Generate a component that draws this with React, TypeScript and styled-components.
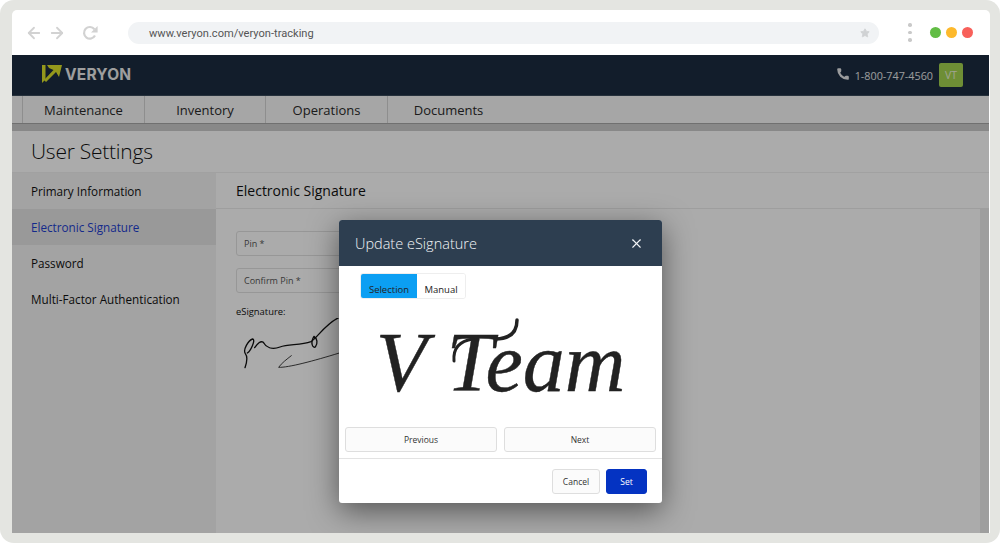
import React from "react";
import styled, { createGlobalStyle } from "styled-components";
import { ArrowLeft, ArrowRight, Star, Phone, X } from "lucide-react";

const Global = createGlobalStyle`
  html, body { margin: 0; padding: 0; background: #fff; }
  * { box-sizing: border-box; }
`;
const Frame = styled.div`
  width: 1000px; height: 543px; background: #e4e5e1; border-radius: 14px;
  padding: 10px 10px 10px 12px; overflow: hidden;
  font-family: "Open Sans", sans-serif; color: #222;
`;
const Win = styled.div`
  width: 100%; height: 100%; background: #fff; border-radius: 5px 5px 0 0; padding-right: 1px;
  display: flex; flex-direction: column; overflow: hidden;
`;
const BrowserBar = styled.div`
  height: 45px; flex: none; display: flex; align-items: center; padding-left: 13px; color: #d2d2d2;
`;
const NavIcons = styled.div`
  display: flex; align-items: center; gap: 5px; width: 103px;
  svg:last-child { margin-left: 11px; }
`;
const UrlPill = styled.div`
  width: 751px; height: 22px; background: #f1f3f5; border-radius: 11px; display: flex; align-items: center;
  justify-content: space-between; padding: 1px 9px 0 21px; font: 11.1px "Roboto", sans-serif; color: #555;
  svg { color: #d0d2d4; fill: #d0d2d4; }
`;
const Dots = styled.div`
  display: flex; flex-direction: column; gap: 4px; margin: 0 18px 0 29px;
  i { width: 3.5px; height: 3.5px; border-radius: 50%; background: #c9c9c9; display: block; }
`;
const Lights = styled.div`display: flex; gap: 5px;`;
const Light = styled.i<{ $c: string }>`
  width: 11px; height: 11px; border-radius: 50%; background: ${p => p.$c}; display: block;
`;
const AppArea = styled.div`
  position: relative; flex: 1; display: flex; flex-direction: column; overflow: hidden; background: #fff;
`;
const Header = styled.header`
  height: 41px; flex: none; background: #1b2c40; display: flex; align-items: center;
  justify-content: space-between; padding: 0 26px 0 30px; border-bottom: 1px solid #3a4a5a;
`;
const Logo = styled.div`display: flex; align-items: center; gap: 2px; margin-top: -2px;`;
const LogoText = styled.span`
  font: 700 15.5px "Inter", sans-serif; color: #ececec; letter-spacing: .2px;
`;
const Contact = styled.div`
  display: flex; align-items: center; font-size: 10.8px; color: #e6e8ea; gap: 5px;
  svg { fill: #e6e8ea; stroke: none; margin-top: -2px; }
`;
const Avatar = styled.div`
  width: 24px; height: 24px; margin-left: 1px; background: #a4d44f; color: #eef5de; border-radius: 2px;
  display: flex; align-items: center; justify-content: center; font-size: 10.5px;
`;
const Nav = styled.nav`
  height: 28px; flex: none; background: #f8f8f8; display: flex; padding-left: 10px;
  border-bottom: 1px solid #a8a8a8;
`;
const NavItem = styled.div<{ $w: number }>`
  width: ${p => p.$w}px; border-left: 1px solid #d4d4d4; display: flex; align-items: center; justify-content: center;
  font-size: 13px; color: #2a2a2a;
`;
const Strip = styled.div`height: 7px; flex: none; background: #cbcbcb;`;
const Title = styled.h1`
  margin: 0; height: 42px; flex: none; padding: 0 0 2px 19px; display: flex; align-items: center;
  font-weight: 300; font-size: 21px; letter-spacing: -.25px; color: #111; border-bottom: 1px solid #f0f0f0;
`;
const Body = styled.div`flex: 1; display: flex; min-height: 0;`;
const Side = styled.aside`width: 204px; flex: none; background: #f4f4f4;`;
const SideItem = styled.div<{ $active?: boolean }>`
  height: 36px; padding-left: 19px; display: flex; align-items: center; font-size: 11.7px; font-weight: 500;
  background: ${p => (p.$active ? "#e4e4e4" : "transparent")};
  color: ${p => (p.$active ? "#1f3fd0" : "#111")};
`;
const Main = styled.main`flex: 1; display: flex; flex-direction: column; min-width: 0; background: #fff;`;
const MainHead = styled.div`
  height: 36px; flex: none; padding-left: 20px; display: flex; align-items: center;
  font-size: 14px; font-weight: 500; color: #111; border-bottom: 1px solid #ececec;
`;
const MainBody = styled.div`flex: 1; display: flex; min-height: 0;`;
const Form = styled.div`flex: 1; padding: 22px 0 0 20px;`;
const Field = styled.div`
  width: 240px; height: 25px; border: 1px solid #e2e2e2; border-radius: 3px; margin-bottom: 12px;
  display: flex; align-items: center; padding-left: 7px; font-size: 9px; color: #555; background: #fff;
`;
const SigLabel = styled.div`font-size: 9.4px; color: #111; margin-top: 0; line-height: 13px;`;
const Signature = styled.svg`display: block; margin-top: 0;`;
const Scroll = styled.div`width: 9px; flex: none; background: #ececec;`;
const Overlay = styled.div`position: absolute; inset: 0; background: rgba(0, 0, 0, .33);`;
const Modal = styled.div`
  position: absolute; left: 327px; top: 165px; width: 323px; height: 283px; background: #fff; border-radius: 3px;
  box-shadow: 0 8px 30px rgba(0, 0, 0, .5); display: flex; flex-direction: column; overflow: hidden;
`;
const ModalHead = styled.div`
  height: 46px; flex: none; background: #2d3e50; color: #f2f4f6; display: flex; align-items: center;
  justify-content: space-between; padding: 0 18px 0 16px; font-weight: 300; font-size: 14.5px;
`;
const ModalBody = styled.div`flex: 1; display: flex; flex-direction: column; padding: 7px 6px 0;`;
const Tabs = styled.div`
  display: flex; align-self: flex-start; margin-left: 15px; height: 26px; border: 1px solid #eee;
  border-radius: 3px; overflow: hidden;
`;
const Tab = styled.div<{ $on?: boolean }>`
  width: ${p => (p.$on ? 56 : 48)}px; display: flex; align-items: flex-end; justify-content: center; padding-bottom: 1px;
  font-size: 9.5px; line-height: 14px; background: ${p => (p.$on ? "#0c9ff3" : "#fff")}; color: #222;
`;
const SigStage = styled.div`
  position: relative; height: 128px; display: flex; align-items: center; justify-content: center; padding-bottom: 2px;
`;
const SigText = styled.div`
  font: italic 84px "Liberation Serif", serif; color: #222; white-space: nowrap; -webkit-text-stroke: .4px #222;
`;
const Swash = styled.svg`position: absolute; left: 0; top: 0;`;
const Pager = styled.div`display: grid; grid-template-columns: 152px 152px; gap: 7px;`;
const PagerBtn = styled.div`
  height: 25px; border: 1px solid #dedede; border-radius: 3px; background: #fbfbfb;
  display: flex; align-items: center; justify-content: center; font-size: 8.5px; color: #333;
`;
const Footer = styled.div`
  height: 45px; flex: none; border-top: 1px solid #e3e3e3; display: flex; justify-content: flex-end;
  align-items: flex-start; gap: 6px; padding: 10px 15px 0 0;
`;
const Btn = styled.div<{ $primary?: boolean }>`
  height: 25px; width: ${p => (p.$primary ? 41 : 48)}px; border-radius: 3px; display: flex; align-items: center;
  justify-content: center; font-size: 8.5px;
  background: ${p => (p.$primary ? "#0433c2" : "#fbfbfb")}; color: ${p => (p.$primary ? "#fff" : "#333")};
  border: 1px solid ${p => (p.$primary ? "#0433c2" : "#dedede")};
`;

export default function App() {
  return (
    <>
      <Global />
      <Frame>
        <Win>
          <BrowserBar>
            <NavIcons>
              <ArrowLeft size={18} strokeWidth={2.4} />
              <ArrowRight size={18} strokeWidth={2.4} />
              <svg width="16" height="16" viewBox="0 0 16 16" fill="none">
                <path d="M13 10.5 A5.8 5.8 0 1 1 12.4 4.2" stroke="currentColor" strokeWidth="2.2" />
                <path d="M15.6 1 V7.6 H9 Z" fill="currentColor" />
              </svg>
            </NavIcons>
            <UrlPill>
              www.veryon.com/veryon-tracking
              <Star size={10} />
            </UrlPill>
            <Dots><i /><i /><i /></Dots>
            <Lights>
              <Light $c="#62bd45" />
              <Light $c="#fdb92c" />
              <Light $c="#f8605a" />
            </Lights>
          </BrowserBar>
          <AppArea>
            <Header>
              <Logo>
                <svg width="21" height="20" viewBox="0 0 21 20">
                  <path d="M0 1 H3.5 V15.5 L0 19 Z" fill="#dde32a" />
                  <path d="M5 1 H20 L17 13 L14 8 L4 18 L2 16 L11.5 6 L7 4 Z" fill="#dde32a" />
                </svg>
                <LogoText>VERYON</LogoText>
              </Logo>
              <Contact>
                <Phone size={14} />
                1-800-747-4560
                <Avatar>VT</Avatar>
              </Contact>
            </Header>
            <Nav>
              <NavItem $w={122}>Maintenance</NavItem>
              <NavItem $w={121}>Inventory</NavItem>
              <NavItem $w={122}>Operations</NavItem>
              <NavItem $w={122}>Documents</NavItem>
            </Nav>
            <Strip />
            <Title>User Settings</Title>
            <Body>
              <Side>
                <SideItem>Primary Information</SideItem>
                <SideItem $active>Electronic Signature</SideItem>
                <SideItem>Password</SideItem>
                <SideItem>Multi-Factor Authentication</SideItem>
              </Side>
              <Main>
                <MainHead>Electronic Signature</MainHead>
                <MainBody>
                  <Form>
                    <Field>Pin *</Field>
                    <Field>Confirm Pin *</Field>
                    <SigLabel>eSignature:</SigLabel>
                    <Signature width="114" height="63" viewBox="18 51 342 189" fill="none" stroke="#111" strokeWidth="4" strokeLinecap="round" strokeLinejoin="round">
                      <path d="M45 200 C52 180 54 168 46 158 C38 146 55 118 68 114 C78 116 62 150 52 156 M74 140 C82 128 92 118 100 124 C108 138 125 148 150 138 C175 128 210 134 243 122 C262 110 285 70 326 50" />
                      <path d="M252 106 C240 125 248 142 256 138 C264 128 262 112 252 106" />
                      <path d="M184 164 C170 175 155 186 146 199 C175 200 250 180 328 156" strokeWidth="2.4" />
                    </Signature>
                  </Form>
                  <Scroll />
                </MainBody>
              </Main>
            </Body>
            <Overlay />
            <Modal>
              <ModalHead>
                Update eSignature
                <X size={15} strokeWidth={1.8} />
              </ModalHead>
              <ModalBody>
                <Tabs>
                  <Tab $on>Selection</Tab>
                  <Tab>Manual</Tab>
                </Tabs>
                <SigStage>
                  <SigText>V Team</SigText>
                  <Swash width="311" height="128" viewBox="0 0 311 128" fill="none" stroke="#222" strokeLinecap="round">
                    <path d="M109 62 C108 50 114 42 128 40" strokeWidth="3" />
                    <path d="M150 40 C164 40 172 34 172 21" strokeWidth="3.5" />
                  </Swash>
                </SigStage>
                <Pager>
                  <PagerBtn>Previous</PagerBtn>
                  <PagerBtn>Next</PagerBtn>
                </Pager>
              </ModalBody>
              <Footer>
                <Btn>Cancel</Btn>
                <Btn $primary>Set</Btn>
              </Footer>
            </Modal>
          </AppArea>
        </Win>
      </Frame>
    </>
  );
}
